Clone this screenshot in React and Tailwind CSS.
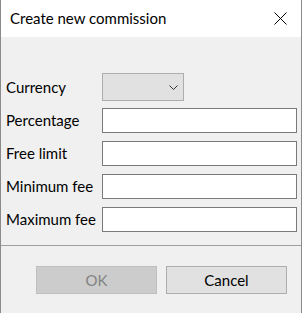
import { useState } from "react";

const fields = ["Percentage", "Free limit", "Minimum fee", "Maximum fee"];

function Row({ label, children, className = "" }) {
  return (
    <div className={`flex items-center ${className}`}>
      <label className="w-[101px] shrink-0 pl-[5px] whitespace-nowrap">{label}</label>
      {children}
    </div>
  );
}

export default function App() {
  const [values, setValues] = useState({});

  return (
    <div
      className="w-[302px] h-[313px] bg-[#f0f0f0] border-l border-r border-[#8a8a8a] flex flex-col text-[15px] text-black overflow-hidden"
      style={{ fontFamily: 'Lato, "Noto Sans", sans-serif' }}
    >
      <div className="h-[37px] bg-white flex items-center justify-between pl-[9px] pr-[14px] shrink-0">
        <span>Create new commission</span>
        <svg width="13" height="13" viewBox="0 0 13 13" className="shrink-0">
          <path d="M0.5 0.5 L12.5 12.5 M12.5 0.5 L0.5 12.5" stroke="#000" strokeWidth="1" fill="none" />
        </svg>
      </div>

      <div className="flex flex-col pt-[36px]">
        <Row label="Currency">
          <button className="w-[82px] h-[28px] bg-[#e1e1e1] border border-[#adadad] flex items-center justify-end pr-[5px] shrink-0">
            <svg width="9" height="5" viewBox="0 0 9 5">
              <path d="M0.5 0.5 L4.5 4.5 L8.5 0.5" stroke="#333" strokeWidth="1" fill="none" />
            </svg>
          </button>
        </Row>
        <div className="flex flex-col gap-[8px] mt-[7px]">
          {fields.map((f) => (
            <Row key={f} label={f}>
              <input
                className="w-[195px] h-[25px] shrink-0 bg-white border border-[#7a7a7a] outline-none px-1 text-[15px]"
                value={values[f] ?? ""}
                onChange={(e) => setValues({ ...values, [f]: e.target.value })}
              />
            </Row>
          ))}
        </div>
      </div>

      <div className="mt-[13px] border-t border-[#a0a0a0] mr-[-1px]" />

      <div className="flex gap-[9px] pl-[35px] pt-[20px]">
        <button
          disabled
          className="w-[121px] h-[28px] bg-[#cccccc] border border-[#bfbfbf] text-[#838383]"
        >
          OK
        </button>
        <button className="w-[121px] h-[28px] bg-[#e1e1e1] border border-[#adadad]">
          Cancel
        </button>
      </div>
    </div>
  );
}
